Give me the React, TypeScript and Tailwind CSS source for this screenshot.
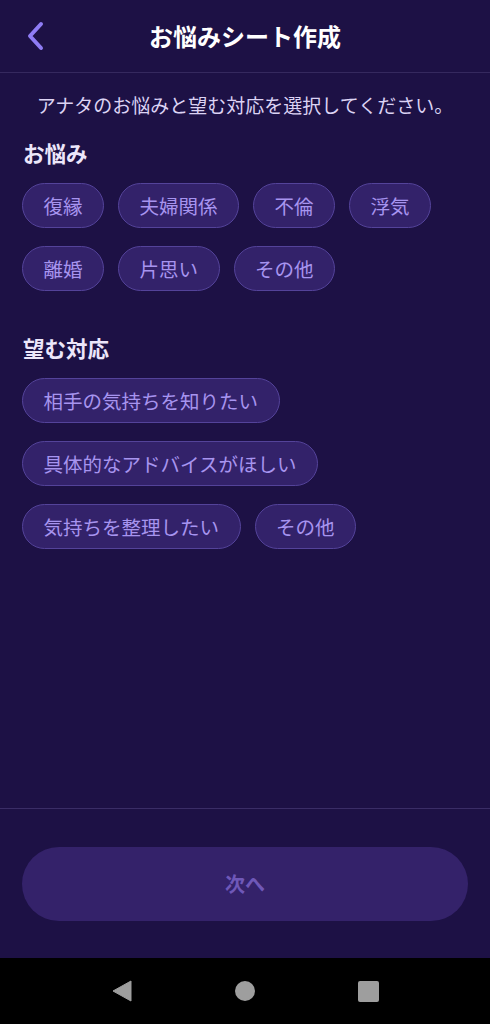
import React, { useState } from 'react';

const worries = ['復縁', '夫婦関係', '不倫', '浮気', '離婚', '片思い', 'その他'];
const wishes = ['相手の気持ちを知りたい', '具体的なアドバイスがほしい', '気持ちを整理したい', 'その他'];

const Chip: React.FC<{ label: string; active: boolean; onClick: () => void }> = ({ label, active, onClick }) => (
    <button
        onClick={onClick}
        className={`h-[45px] px-[20.5px] rounded-full border flex items-center text-[19.5px] leading-none ${
            active ? 'bg-[#6d4fd8] border-[#8b74f0] text-white' : 'bg-[#33226a] border-[#54439a] text-[#a794ef]'
        }`}
    >
        {label}
    </button>
);

const App: React.FC = () => {
    const [worry, setWorry] = useState<string | null>(null);
    const [wish, setWish] = useState<string | null>(null);
    const ready = worry !== null && wish !== null;

    return (
        <div
            className="w-full h-[1024px] flex flex-col bg-[#1d1145]"
            style={{ fontFamily: '"Noto Sans CJK JP", "Noto Sans", sans-serif' }}
        >
            <header className="h-[73px] shrink-0 grid grid-cols-[60px_1fr_60px] items-center border-b border-[#35295e]">
                <button className="pl-[24px] flex items-center h-full">
                    <svg width="24" height="32" viewBox="0 0 24 32" fill="none">
                        <path d="M17 4 L6 16 L17 28" stroke="#8f7cf4" strokeWidth="4" strokeLinecap="round" strokeLinejoin="round" />
                    </svg>
                </button>
                <h1 className="text-center text-white text-[24px] font-bold leading-none">お悩みシート作成</h1>
                <div />
            </header>

            <div className="flex-1 flex flex-col">
                <p className="pt-[18px] text-center text-[19px] leading-[28px] text-[#dcd3f4]">
                    アナタのお悩みと望む対応を選択してください。
                </p>

                <section className="px-[22px] mt-[19px]">
                    <h2 className="text-[21.5px] leading-[30px] font-bold text-[#ece6fa] pl-[1px]">お悩み</h2>
                    <div className="mt-[15px] flex flex-wrap gap-x-[14px] gap-y-[18px]">
                        {worries.map((w) => (
                            <Chip key={w} label={w} active={worry === w} onClick={() => setWorry(w)} />
                        ))}
                    </div>
                </section>

                <section className="px-[22px] mt-[42px]">
                    <h2 className="text-[21.5px] leading-[30px] font-bold text-[#ece6fa] pl-[1px]">望む対応</h2>
                    <div className="mt-[15px] flex flex-wrap gap-x-[14px] gap-y-[18px]">
                        {wishes.map((w, i) => (
                            <Chip key={w + i} label={w} active={wish === w + i} onClick={() => setWish(w + i)} />
                        ))}
                    </div>
                </section>
            </div>

            <div className="shrink-0 border-t border-[#3a2d66] px-[22px] pt-[38px] pb-[37px]">
                <button
                    disabled={!ready}
                    className={`w-full h-[74px] rounded-full flex items-center justify-center text-[20px] font-bold ${
                        ready ? 'bg-[#7c5cf0] text-white' : 'bg-[#34226a] text-[#6f58b8]'
                    }`}
                >
                    次へ
                </button>
            </div>

            <nav className="h-[66px] shrink-0 bg-black flex items-center justify-center">
                <div className="flex items-center gap-[103px]">
                    <svg width="20" height="22" viewBox="0 0 20 22">
                        <path d="M19 1 L19 21 L1 11 Z" fill="#9e9e9e" strokeLinejoin="round" stroke="#9e9e9e" strokeWidth="1" />
                    </svg>
                    <div className="w-[20px] h-[20px] rounded-full bg-[#9e9e9e]" />
                    <div className="w-[21px] h-[21px] rounded-[2px] bg-[#9e9e9e]" />
                </div>
            </nav>
        </div>
    );
};

export default App;
